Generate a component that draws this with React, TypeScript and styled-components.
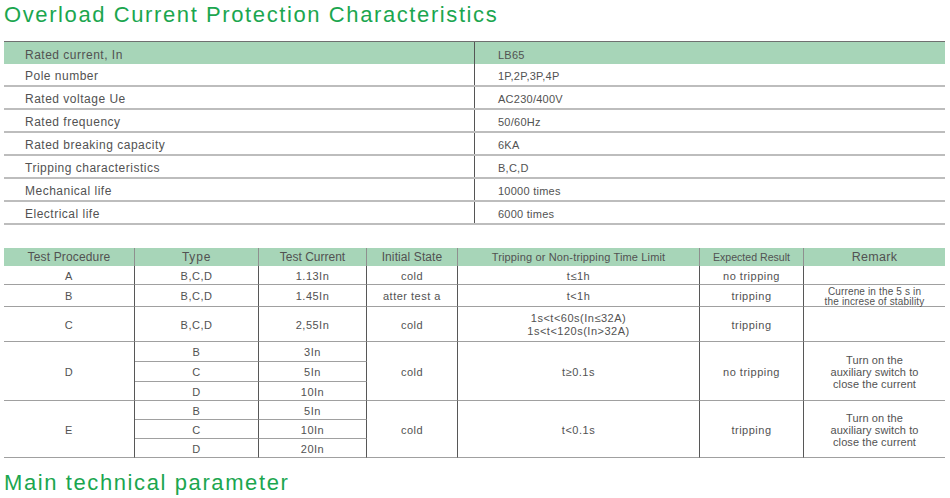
import React from "react";
import styled, { createGlobalStyle } from "styled-components";

const Global = createGlobalStyle`
  html, body { margin: 0; padding: 0; background: #ffffff; }
  body {
    font-family: "Liberation Sans", Arial, Helvetica, sans-serif;
    color: #525252;
  }
`;

const Page = styled.div`
  width: 950px;
  box-sizing: border-box;
  padding: 2px 5px 0 4px;
  display: flex;
  flex-direction: column;
`;

const Title = styled.h1<{ $mt: number }>`
  margin: ${(p) => p.$mt}px 0 0 0;
  font-size: 22px;
  line-height: 25px;
  font-weight: 400;
  letter-spacing: 1.6px;
  color: #1ba64f;
  white-space: nowrap;
`;

/* ---------- spec table ---------- */

const SpecTable = styled.div`
  margin-top: 14px;
  width: 941px;
  border-top: 1px solid #6f6f6f;
  display: flex;
  flex-direction: column;
`;

const SpecRow = styled.div<{ $head?: boolean }>`
  display: grid;
  grid-template-columns: 470px 1fr;
  height: ${(p) => (p.$head ? 22 : 21)}px;
  background: ${(p) => (p.$head ? "#a7d5b8" : "transparent")};
  border-bottom: ${(p) => (p.$head ? "none" : "2px solid #bdbdbd")};
`;

const SpecLabel = styled.div`
  display: flex;
  align-items: center;
  box-sizing: border-box;
  padding: 3px 0 0 21px;
  font-size: 12px;
  letter-spacing: 0.5px;
  white-space: nowrap;
`;

const SpecValue = styled.div`
  display: flex;
  align-items: center;
  box-sizing: border-box;
  padding: 3px 0 0 23px;
  border-left: 1px solid #555555;
  font-size: 11px;
  letter-spacing: 0.25px;
  white-space: nowrap;
`;

/* ---------- test table ---------- */

const TestGrid = styled.div`
  margin-top: 23px;
  width: 941px;
  display: grid;
  grid-template-columns: 131px 124px 108px 91px 242px 104px 141px;
  grid-template-rows: 18px 19px 22px 35px 20px 20px 19px 19px 19px 19px;
`;

const HeadCell = styled.div<{ $col: number; $fs: number; $ls: number }>`
  grid-row: 1;
  grid-column: ${(p) => p.$col};
  background: #a7d5b8;
  border-right: ${(p) => (p.$col === 7 ? "none" : "1px solid #8f8f8f")};
  box-sizing: border-box;
  display: flex;
  align-items: center;
  justify-content: center;
  font-size: ${(p) => p.$fs}px;
  letter-spacing: ${(p) => p.$ls}px;
  white-space: nowrap;
`;

const Cell = styled.div<{ $row: string; $col: number }>`
  grid-row: ${(p) => p.$row};
  grid-column: ${(p) => p.$col};
  box-sizing: border-box;
  padding-top: 2px;
  border-bottom: 1px solid #a0a0a0;
  border-right: ${(p) => (p.$col === 7 ? "none" : "1px solid #575757")};
  display: flex;
  flex-direction: column;
  align-items: center;
  justify-content: center;
  text-align: center;
  font-size: 11px;
  letter-spacing: 0.5px;
  line-height: 13px;
  white-space: nowrap;
`;

const Note = styled.span<{ $small?: boolean }>`
  display: block;
  font-size: ${(p) => (p.$small ? 10 : 11)}px;
  line-height: ${(p) => (p.$small ? 9.5 : 12)}px;
  letter-spacing: ${(p) => (p.$small ? 0.15 : 0.1)}px;
`;

const specs: [string, string][] = [
  ["Pole number", "1P,2P,3P,4P"],
  ["Rated voltage Ue", "AC230/400V"],
  ["Rated frequency", "50/60Hz"],
  ["Rated breaking capacity", "6KA"],
  ["Tripping characteristics", "B,C,D"],
  ["Mechanical life", "10000 times"],
  ["Electrical life", "6000 times"],
];

const heads: { t: string; fs: number; ls: number }[] = [
  { t: "Test Procedure", fs: 12, ls: 0.15 },
  { t: "Type", fs: 12, ls: 0.8 },
  { t: "Test Current", fs: 12, ls: 0 },
  { t: "Initial State", fs: 12, ls: 0.1 },
  { t: "Tripping or Non-tripping Time Limit", fs: 11, ls: 0.15 },
  { t: "Expected Result", fs: 10.6, ls: 0 },
  { t: "Remark", fs: 12.5, ls: 0.3 },
];

const turnOn = (
  <>
    <Note>Turn on the</Note>
    <Note>auxiliary switch to</Note>
    <Note>close the current</Note>
  </>
);

export default function App() {
  return (
    <>
      <Global />
      <Page>
        <Title $mt={0}>Overload Current Protection Characteristics</Title>

        <SpecTable>
          <SpecRow $head>
            <SpecLabel>Rated current, In</SpecLabel>
            <SpecValue>LB65</SpecValue>
          </SpecRow>
          {specs.map(([l, v]) => (
            <SpecRow key={l}>
              <SpecLabel>{l}</SpecLabel>
              <SpecValue>{v}</SpecValue>
            </SpecRow>
          ))}
        </SpecTable>

        <TestGrid>
          {heads.map((h, i) => (
            <HeadCell key={h.t} $col={i + 1} $fs={h.fs} $ls={h.ls}>
              {h.t}
            </HeadCell>
          ))}

          {/* A */}
          <Cell $row="2" $col={1}>A</Cell>
          <Cell $row="2" $col={2}>B,C,D</Cell>
          <Cell $row="2" $col={3}>1.13In</Cell>
          <Cell $row="2" $col={4}>cold</Cell>
          <Cell $row="2" $col={5}>t≤1h</Cell>
          <Cell $row="2" $col={6}>no tripping</Cell>
          <Cell $row="2" $col={7} />

          {/* B */}
          <Cell $row="3" $col={1}>B</Cell>
          <Cell $row="3" $col={2}>B,C,D</Cell>
          <Cell $row="3" $col={3}>1.45In</Cell>
          <Cell $row="3" $col={4}>atter test a</Cell>
          <Cell $row="3" $col={5}>t&lt;1h</Cell>
          <Cell $row="3" $col={6}>tripping</Cell>
          <Cell $row="3" $col={7}>
            <Note $small>Currene in the 5 s in</Note>
            <Note $small>the increse of stability</Note>
          </Cell>

          {/* C */}
          <Cell $row="4" $col={1}>C</Cell>
          <Cell $row="4" $col={2}>B,C,D</Cell>
          <Cell $row="4" $col={3}>2,55In</Cell>
          <Cell $row="4" $col={4}>cold</Cell>
          <Cell $row="4" $col={5}>
            <span>1s&lt;t&lt;60s(In≤32A)</span>
            <span>1s&lt;t&lt;120s(In&gt;32A)</span>
          </Cell>
          <Cell $row="4" $col={6}>tripping</Cell>
          <Cell $row="4" $col={7} />

          {/* D */}
          <Cell $row="5 / span 3" $col={1}>D</Cell>
          <Cell $row="5" $col={2}>B</Cell>
          <Cell $row="5" $col={3}>3In</Cell>
          <Cell $row="6" $col={2}>C</Cell>
          <Cell $row="6" $col={3}>5In</Cell>
          <Cell $row="7" $col={2}>D</Cell>
          <Cell $row="7" $col={3}>10In</Cell>
          <Cell $row="5 / span 3" $col={4}>cold</Cell>
          <Cell $row="5 / span 3" $col={5}>t≥0.1s</Cell>
          <Cell $row="5 / span 3" $col={6}>no tripping</Cell>
          <Cell $row="5 / span 3" $col={7}>{turnOn}</Cell>

          {/* E */}
          <Cell $row="8 / span 3" $col={1}>E</Cell>
          <Cell $row="8" $col={2}>B</Cell>
          <Cell $row="8" $col={3}>5In</Cell>
          <Cell $row="9" $col={2}>C</Cell>
          <Cell $row="9" $col={3}>10In</Cell>
          <Cell $row="10" $col={2}>D</Cell>
          <Cell $row="10" $col={3}>20In</Cell>
          <Cell $row="8 / span 3" $col={4}>cold</Cell>
          <Cell $row="8 / span 3" $col={5}>t&lt;0.1s</Cell>
          <Cell $row="8 / span 3" $col={6}>tripping</Cell>
          <Cell $row="8 / span 3" $col={7}>{turnOn}</Cell>
        </TestGrid>

        <Title $mt={12}>Main technical parameter</Title>
      </Page>
    </>
  );
}
